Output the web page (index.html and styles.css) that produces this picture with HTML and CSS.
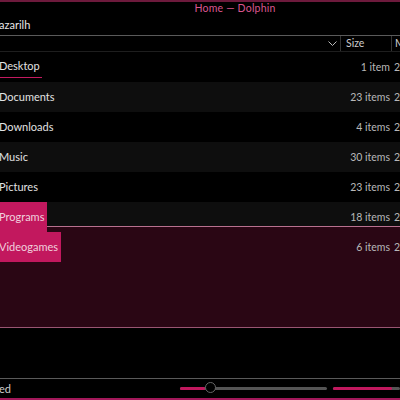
FILE: index.html
```html
<!DOCTYPE html>
<html lang="en">
<head>
    <meta charset="UTF-8">
    <title>Home — Dolphin</title>
    <link rel="stylesheet" href="styles.css">
</head>
<body>
    <div class="window">
        <div class="titlebar">Home — Dolphin</div>
        <div class="location">azarilh</div>

        <div class="header">
            <div class="col-name">
                <svg class="chevron" width="9" height="6" viewBox="0 0 9 6">
                    <path d="M0.5 0.5 L4.5 4.5 L8.5 0.5" fill="none" stroke="#bbb" stroke-width="1"/>
                </svg>
            </div>
            <div class="col-size">Size</div>
            <div class="col-date">M</div>
        </div>

        <div class="list">
            <div class="selection"></div>

            <div class="row">
                <div class="name"><span class="label focus">Desktop</span></div>
                <div class="size">1 item</div>
                <div class="date">2</div>
            </div>
            <div class="row alt">
                <div class="name"><span class="label">Documents</span></div>
                <div class="size">23 items</div>
                <div class="date">2</div>
            </div>
            <div class="row">
                <div class="name"><span class="label">Downloads</span></div>
                <div class="size">4 items</div>
                <div class="date">2</div>
            </div>
            <div class="row alt">
                <div class="name"><span class="label">Music</span></div>
                <div class="size">30 items</div>
                <div class="date">2</div>
            </div>
            <div class="row">
                <div class="name"><span class="label">Pictures</span></div>
                <div class="size">23 items</div>
                <div class="date">2</div>
            </div>
            <div class="row alt">
                <div class="name"><span class="label selected">Programs</span></div>
                <div class="size">18 items</div>
                <div class="date">2</div>
            </div>
            <div class="row">
                <div class="name"><span class="label selected">Videogames</span></div>
                <div class="size">6 items</div>
                <div class="date">2</div>
            </div>
        </div>

        <div class="statusbar">
            <div class="status-text">ed</div>
            <div class="zoom">
                <div class="track">
                    <div class="fill" style="width: 25px"></div>
                    <div class="knob"></div>
                </div>
            </div>
            <div class="space">
                <div class="track">
                    <div class="fill" style="width: 59px"></div>
                </div>
            </div>
        </div>
    </div>
</body>
</html>
```

FILE: styles.css
```css
html, body {
    margin: 0;
    padding: 0;
    background: #000;
}

body {
    font-family: Lato, "Open Sans", sans-serif;
    font-size: 11px;
    color: #d8d8d8;
}

.window {
    width: 400px;
    height: 400px;
    display: flex;
    flex-direction: column;
    overflow: hidden;
    border-top: 2px solid #6d1a3c;
    border-bottom: 2px solid #a3185a;
    box-sizing: border-box;
}

.titlebar {
    height: 15px;
    line-height: 12px;
    padding-left: 70px;
    text-align: center;
    color: #d9568f;
    font-size: 10.5px;
    letter-spacing: 0.2px;
}

.location {
    height: 18px;
    line-height: 16px;
    margin-left: -1px;
    color: #e8e8e8;
    font-size: 11px;
}

.header {
    display: flex;
    height: 15px;
    border-top: 1px solid #5a5a5a;
    border-bottom: 1px solid #1e1e1e;
    font-size: 10.5px;
    color: #ccc;
    line-height: 15px;
}

.col-name {
    flex: 1;
    display: flex;
    justify-content: flex-end;
    align-items: center;
    padding-right: 3px;
}

.chevron {
    display: block;
}

.col-size {
    width: 45px;
    padding-left: 5px;
    border-left: 1px solid #333;
}

.col-date {
    width: 5px;
    padding-left: 3px;
    border-left: 1px solid #333;
}

.list {
    position: relative;
    flex: 1;
}

.selection {
    position: absolute;
    top: 174px;
    left: 0;
    right: 0;
    height: 100px;
    background: #2a0614;
    border-top: 1px solid #b8708f;
    border-bottom: 1px solid #9a5573;
    z-index: 1;
}

.row {
    display: flex;
    height: 30px;
    align-items: center;
}

.row.alt {
    background: #0e0e0e;
}

.name {
    flex: 1;
    height: 100%;
    margin-left: -3px;
    display: flex;
}

.label {
    position: relative;
    z-index: 2;
    padding: 0 2px;
    line-height: 30px;
    height: 30px;
    color: #e2e2e2;
}

.label.focus {
    height: 20px;
    margin-top: 5px;
    line-height: 18px;
    border-bottom: 1px solid #c41a60;
}

.label.selected {
    background: #c2185e;
    color: #f0d0dd;
    padding-right: 3px;
}

.size {
    position: relative;
    z-index: 2;
    width: 60px;
    padding-right: 4px;
    text-align: right;
    color: #b8b8b8;
    font-size: 10.5px;
}

.date {
    position: relative;
    z-index: 2;
    width: 6px;
    color: #b8b8b8;
    font-size: 10.5px;
}

.statusbar {
    display: flex;
    align-items: center;
    height: 19px;
    border-top: 1px solid #5a5a5a;
}

.status-text {
    margin-left: -1px;
    width: 181px;
    color: #ccc;
}

.zoom {
    width: 147px;
}

.space {
    flex: 1;
    margin-left: 6px;
}

.track {
    position: relative;
    height: 3px;
    border-radius: 2px;
    background: #555;
}

.fill {
    height: 3px;
    border-radius: 2px;
    background: #c2185e;
}

.knob {
    position: absolute;
    left: 25px;
    top: -5px;
    width: 11px;
    height: 11px;
    box-sizing: border-box;
    border-radius: 50%;
    border: 1px solid #666;
    background: #000;
}
```
